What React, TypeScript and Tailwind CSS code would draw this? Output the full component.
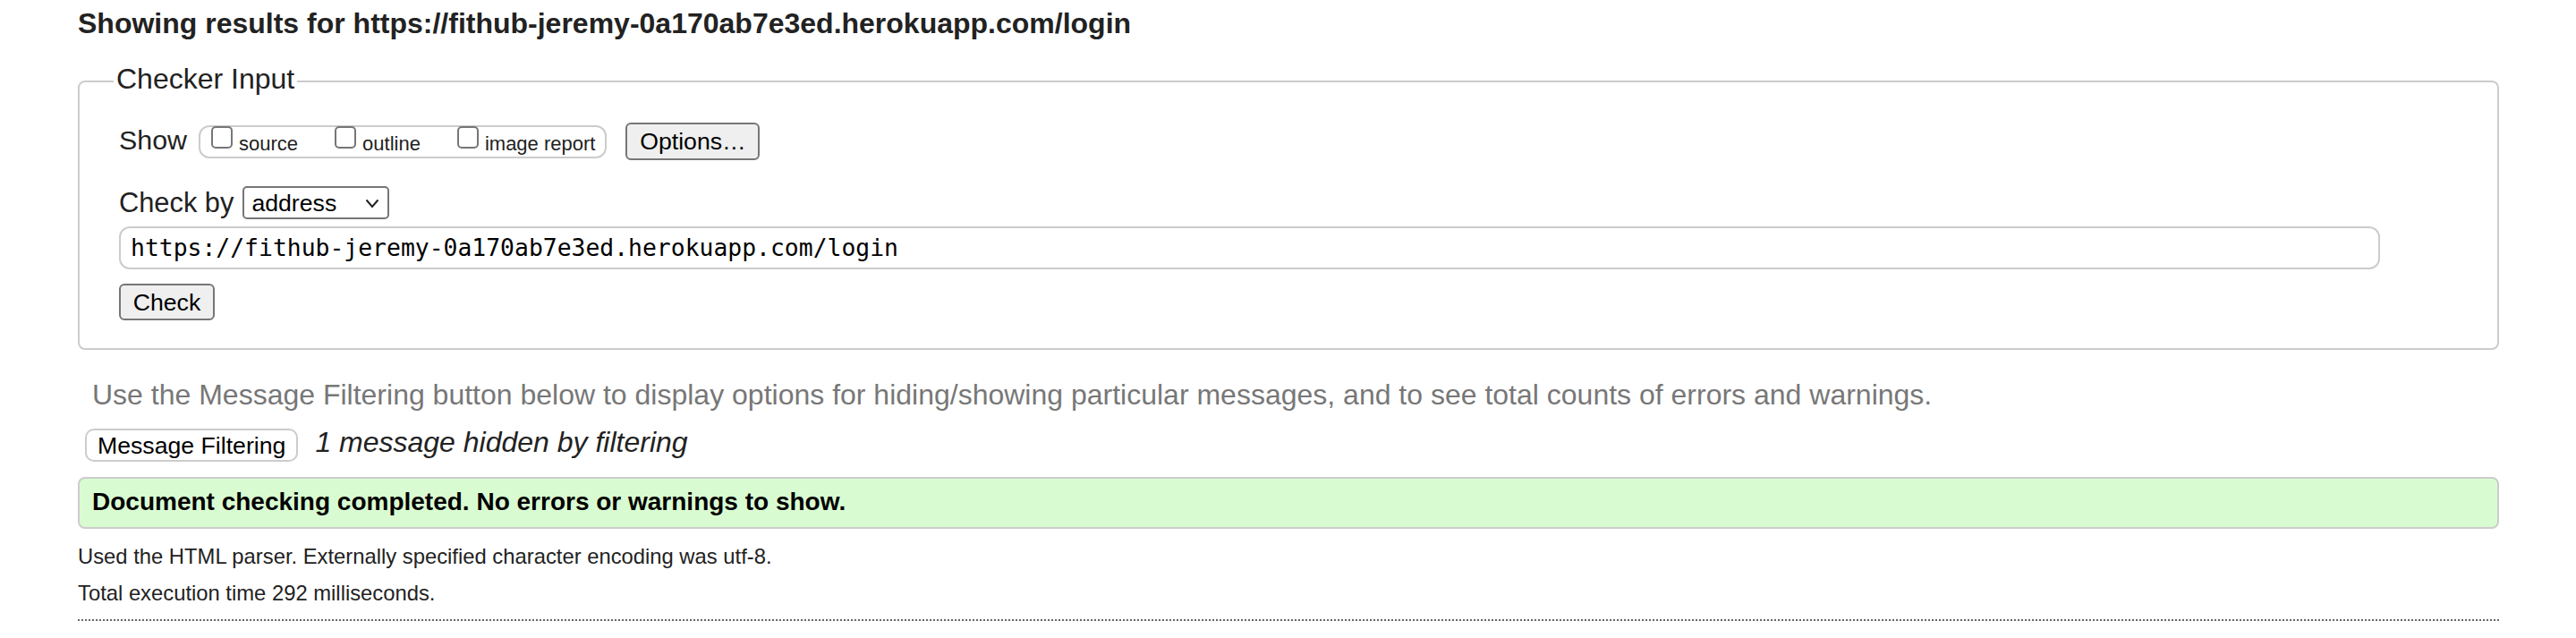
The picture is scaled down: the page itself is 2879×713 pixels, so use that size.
import React from "react";

function Box() {
  return (
    <span className="inline-block w-[24px] h-[25px] border-2 border-[#767676] rounded-[5px] bg-white shrink-0" />
  );
}

export default function App() {
  return (
    <div className="min-h-screen bg-white text-[#222] font-['Liberation_Sans',Arial,sans-serif] pt-[8px] pl-[87px] pr-[86px]">
      <h2 className="text-[32px] font-bold leading-[37px] m-0">
        Showing results for https://fithub-jeremy-0a170ab7e3ed.herokuapp.com/login
      </h2>

      <fieldset className="mt-[25px] border-2 border-[#ccc] rounded-[8px] pl-[38px] pb-[31px]">
        <legend className="px-[3px] pb-[4px] text-[32px] leading-[37px]">Checker Input</legend>
        <div className="pl-[6px]">
          <div className="mt-[26px] flex items-center h-[42px]">
            <span className="text-[30.4px] leading-[35px] mt-[-3px]">Show</span>
            <div className="ml-[13px] h-[37px] border-2 border-[#ccc] rounded-[12px] flex items-start pl-[12px] pr-[11px]">
              <div className="flex items-start">
                <span className="mt-[-1px]"><Box /></span>
                <span className="ml-[7px] mt-[6px] text-[22px] leading-[25px]">source</span>
              </div>
              <div className="flex items-start ml-[41px]">
                <span className="mt-[-1px]"><Box /></span>
                <span className="ml-[7px] mt-[6px] text-[22px] leading-[25px]">outline</span>
              </div>
              <div className="flex items-start ml-[41px]">
                <span className="mt-[-1px]"><Box /></span>
                <span className="ml-[7px] mt-[6px] text-[22px] leading-[25px]">image report</span>
              </div>
            </div>
            <button className="ml-[21px] w-[150px] h-[42px] border-2 border-[#767676] rounded-[6px] bg-[#efefef] text-[26.67px] leading-[30px] text-black flex items-center justify-center">
              Options…
            </button>
          </div>

          <div className="mt-[29px] flex items-center h-[37px]">
            <span className="text-[30.8px] leading-[35px]">Check by</span>
            <div className="ml-[10px] w-[164px] h-[37px] border-2 border-[#767676] rounded-[5px] bg-white flex items-center justify-between pl-[8px] pr-[9px]">
              <span className="text-[26.67px] leading-[30px] text-black">address</span>
              <svg width="16" height="11" viewBox="0 0 16 11" className="mt-[2px]">
                <path d="M1.5 1.5 L8 9 L14.5 1.5" fill="none" stroke="#222" strokeWidth="2" />
              </svg>
            </div>
          </div>

          <div className="mt-[8px] w-[2527px] h-[48px] border-2 border-[#ccc] rounded-[12px] bg-white flex items-center pl-[11px]">
            <span className="font-['DejaVu_Sans_Mono',monospace] text-[26.4px] leading-[30px] text-black">
              https://fithub-jeremy-0a170ab7e3ed.herokuapp.com/login
            </span>
          </div>

          <button className="mt-[16px] w-[107px] h-[41px] border-2 border-[#767676] rounded-[6px] bg-[#efefef] text-[26.67px] leading-[30px] text-black flex items-center justify-center">
            Check
          </button>
        </div>
      </fieldset>

      <p className="mt-[32px] pl-[16px] text-[32px] leading-[37px] text-[#777]">
        Use the Message Filtering button below to display options for hiding/showing particular messages, and to see total counts of errors and warnings.
      </p>

      <div className="mt-[19px] pl-[8px] flex items-start">
        <button className="h-[37px] border-2 border-[#ccc] rounded-[10px] bg-white pl-[12px] pr-[12px] text-[26.67px] leading-[30px] text-black flex items-center">
          Message Filtering
        </button>
        <span className="ml-[19px] italic text-[32px] leading-[37px] mt-[-3px]">1 message hidden by filtering</span>
      </div>

      <div className="mt-[17px] h-[58px] border-2 border-[#ccc] rounded-[8px] bg-[#d9fbd1] pl-[14px] pt-[10px]">
        <p className="font-bold text-[28px] leading-[32px] text-black">
          Document checking completed. No errors or warnings to show.
        </p>
      </div>

      <p className="mt-[17px] text-[23.8px] leading-[28px]">
        Used the HTML parser. Externally specified character encoding was utf-8.
      </p>
      <p className="mt-[13px] text-[23.8px] leading-[28px]">Total execution time 292 milliseconds.</p>

      <div className="mt-[15px] border-t-2 border-dotted border-[#666]" />
    </div>
  );
}
